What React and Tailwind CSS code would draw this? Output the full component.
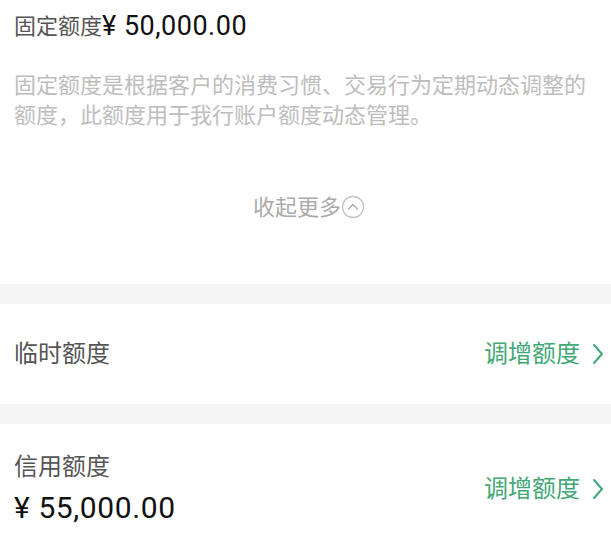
import React from "react";

const cjk = { fontFamily: 'Roboto, "Noto Sans CJK SC", sans-serif' };

function Chevron() {
  return (
    <svg width="14" height="24" viewBox="0 0 14 24" fill="none" className="ml-[11px]">
      <path d="M3 3 L11 12 L3 21" stroke="#41a876" strokeWidth="2" strokeLinecap="round" strokeLinejoin="round" />
    </svg>
  );
}

function Link() {
  return (
    <div className="flex items-center text-[24px] leading-none text-[#41a876]">
      <span>调增额度</span>
      <Chevron />
    </div>
  );
}

export default function App() {
  return (
    <div className="w-[611px] h-[539px] overflow-hidden bg-white" style={cjk}>
      <div className="px-[14px]">
        <div className="h-[52px] flex items-center">
          <span className="text-[22px] text-[#555]">固定额度</span>
          <span className="text-[27px] tracking-[0.5px] text-[#111]">¥ 50,000.00</span>
        </div>
        <p className="mt-[19px] text-[22px] leading-[30px] text-[#bdbdbd]">
          固定额度是根据客户的消费习惯、交易行为定期动态调整的额度，此额度用于我行账户额度动态管理。
        </p>
        <div className="mt-[56px] h-[40px] flex items-center justify-center pl-[7px]">
          <span className="text-[22px] text-[#aaa]">收起更多</span>
          <svg width="24" height="24" viewBox="0 0 24 24" fill="none">
            <circle cx="12" cy="12" r="10.5" stroke="#c4c4c4" strokeWidth="1.3" />
            <path d="M7.5 14 L12 9.5 L16.5 14" stroke="#b0b0b0" strokeWidth="1.5" strokeLinecap="round" strokeLinejoin="round" />
          </svg>
        </div>
        <div className="h-[57px]" />
      </div>
      <div className="h-[20px] bg-[#f5f5f5]" />
      <div className="h-[100px] flex items-center justify-between pl-[14px] pr-[6px]">
        <span className="text-[24px] text-[#555]">临时额度</span>
        <Link />
      </div>
      <div className="h-[20px] bg-[#f5f5f5]" />
      <div className="pt-[27px] flex items-center justify-between pl-[14px] pr-[6px]">
        <div className="flex flex-col">
          <span className="text-[24px] leading-[32px] text-[#555]">信用额度</span>
          <span className="mt-[7px] text-[30px] leading-[36px] tracking-[0.6px] text-[#111]">¥ 55,000.00</span>
        </div>
        <Link />
      </div>
    </div>
  );
}
